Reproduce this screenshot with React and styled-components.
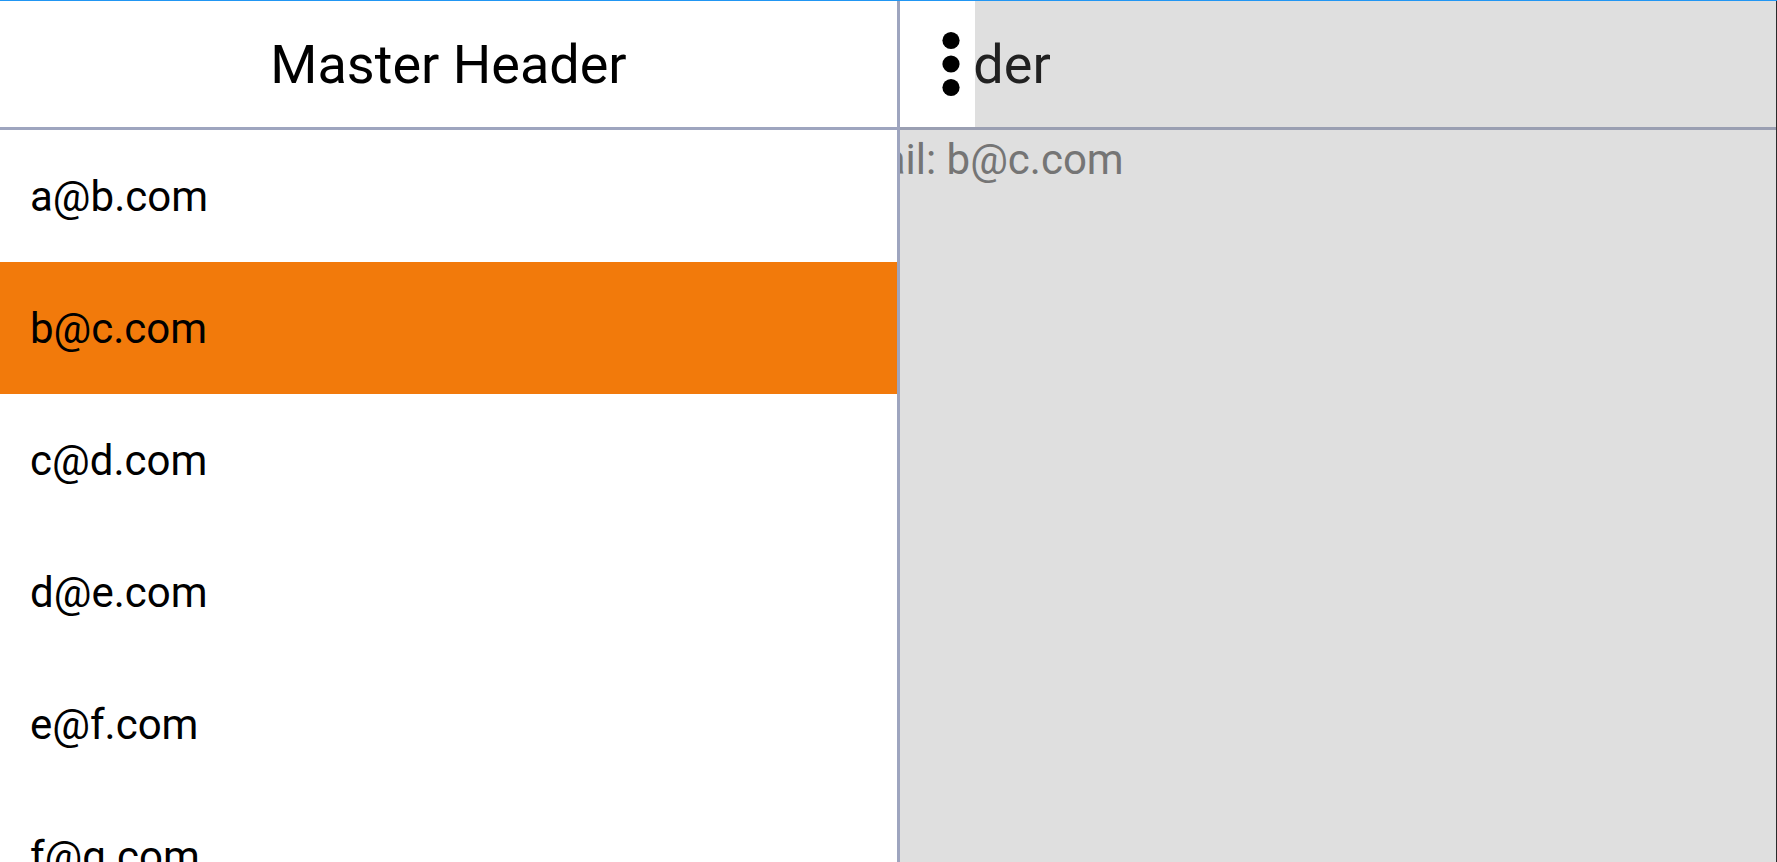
import React from "react";
import styled, { createGlobalStyle } from "styled-components";

const Global = createGlobalStyle`
  html, body {
    margin: 0;
    padding: 0;
    height: 100%;
    overflow: hidden;
    background: #ffffff;
  }
  body {
    font-family: Roboto, "Noto Sans", "Liberation Sans", sans-serif;
  }
  #root { height: 100%; }
`;

const Shell = styled.div`
  display: flex;
  height: 100vh;
  border-top: 1px solid #2196f3;
  box-sizing: border-box;
  overflow: hidden;
`;

const Master = styled.section`
  position: relative;
  z-index: 2;
  width: 897px;
  flex: 0 0 897px;
  background: #ffffff;
  border-right: 3px solid #9ea5bf;
  display: flex;
  flex-direction: column;
`;

const MasterHeader = styled.header`
  height: 126px;
  flex: 0 0 126px;
  border-bottom: 3px solid #9ea5bf;
  display: flex;
  align-items: center;
  justify-content: center;
  font-size: 54px;
  color: #000000;
`;

const List = styled.ul`
  list-style: none;
  margin: 0;
  padding: 0;
`;

const Row = styled.li`
  height: 132px;
  display: flex;
  align-items: center;
  padding-left: 30px;
  font-size: 42px;
  color: #000000;
  background: ${(p) => (p.$selected ? "#f27a0b" : "transparent")};
`;

const Detail = styled.section`
  position: relative;
  z-index: 1;
  flex: 1;
  background: #dfdfdf;
  border-right: 1px solid #2a2a2a;
  display: flex;
  flex-direction: column;
`;

const DetailHeader = styled.header`
  height: 126px;
  flex: 0 0 126px;
  border-bottom: 3px solid #9a9fb2;
  display: flex;
  align-items: stretch;
`;

const IconBox = styled.div`
  width: 75px;
  flex: 0 0 75px;
  background: #ffffff;
  display: flex;
  align-items: center;
  padding-left: 41px;
  box-sizing: border-box;
`;

const TitleClip = styled.div`
  flex: 1;
  overflow: hidden;
  display: flex;
  align-items: center;
`;

const Title = styled.h1`
  margin: 0 0 0 -249px;
  font-weight: 400;
  font-size: 54px;
  color: #212121;
  white-space: nowrap;
`;

const Body = styled.div`
  padding-top: 5px;
  margin-left: -78px;
  font-size: 42px;
  color: #757575;
  white-space: nowrap;
`;

const emails = ["a@b.com", "b@c.com", "c@d.com", "d@e.com", "e@f.com", "f@g.com"];

function MoreVert() {
  return (
    <svg width="20" height="70" viewBox="0 0 20 70">
      <defs>
        <filter id="soft" x="-20%" y="-20%" width="140%" height="140%">
          <feGaussianBlur stdDeviation="0.7" />
        </filter>
      </defs>
      <g fill="#000" filter="url(#soft)">
        <circle cx="10" cy="11.5" r="8.6" />
        <circle cx="10" cy="35" r="8.6" />
        <circle cx="10" cy="58.5" r="8.6" />
      </g>
    </svg>
  );
}

export default function App() {
  return (
    <>
      <Global />
      <Shell>
        <Master>
          <MasterHeader>Master Header</MasterHeader>
          <List>
            {emails.map((e) => (
              <Row key={e} $selected={e === "b@c.com"}>
                {e}
              </Row>
            ))}
          </List>
        </Master>
        <Detail>
          <DetailHeader>
            <IconBox>
              <MoreVert />
            </IconBox>
            <TitleClip>
              <Title>Detail Header</Title>
            </TitleClip>
          </DetailHeader>
          <Body>Email: b@c.com</Body>
        </Detail>
      </Shell>
    </>
  );
}
